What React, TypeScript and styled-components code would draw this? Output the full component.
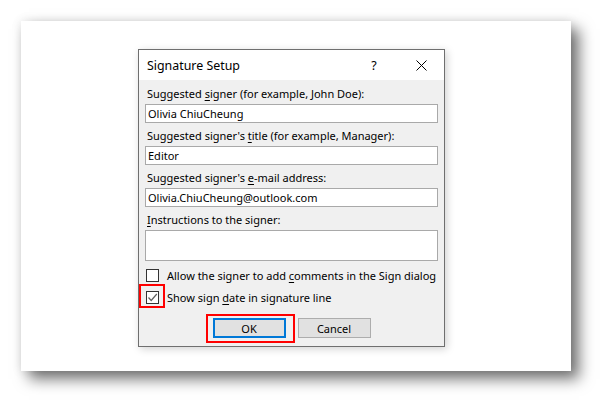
import styled, { createGlobalStyle } from "styled-components";

const Global = createGlobalStyle`
html, body {
    margin: 0;
    padding: 0;
    background: #ffffff;
}
body {
    font-family: "Noto Sans", "Open Sans", sans-serif;
    font-size: 11px;
    color: #000;
}
`

interface iField {
    label: React.ReactNode
    value?: string
    tall?: boolean
}

const Field = ({ label, value, tall }: iField) => {
    return (
        <Group>
            <Label>{label}</Label>
            <Input $tall={tall}>{value}</Input>
        </Group>
    )
}

const App = () => {
    return (
        <>
            <Global />
            <Page>
                <Card>
                    <Dialog>
                        <TitleBar>
                            <Title>Signature Setup</Title>
                            <Help>?</Help>
                            <Close>
                                <svg width="11" height="11" viewBox="0 0 11 11">
                                    <path d="M0.5 0.5 L10.5 10.5 M10.5 0.5 L0.5 10.5" stroke="#000" strokeWidth="1" fill="none" />
                                </svg>
                            </Close>
                        </TitleBar>
                        <Body>
                            <Field label={<>Suggested <u>s</u>igner (for example, John Doe):</>} value="Olivia ChiuCheung" />
                            <Field label={<>Suggested signer's <u>t</u>itle (for example, Manager):</>} value="Editor" />
                            <Field label={<>Suggested signer's <u>e</u>-mail address:</>} value="Olivia.ChiuCheung@outlook.com" />
                            <Field label={<><u>I</u>nstructions to the signer:</>} tall />
                            <CheckRow $first>
                                <Box />
                                <CheckText>Allow the signer to add <u>c</u>omments in the Sign dialog</CheckText>
                            </CheckRow>
                            <CheckRow>
                                <Box>
                                    <svg width="11" height="11" viewBox="0 0 11 11">
                                        <path d="M1.5 5.5 L4.2 8.5 L9.8 2" stroke="#606060" strokeWidth="1.2" fill="none" />
                                    </svg>
                                    <Highlight $l={-8} $t={-8} $w={26} $h={24} />
                                </Box>
                                <CheckText>Show sign <u>d</u>ate in signature line</CheckText>
                            </CheckRow>
                            <Buttons>
                                <Button $primary>
                                    OK
                                    <Highlight $l={-9} $t={-6} $w={89} $h={29} />
                                </Button>
                                <Button>Cancel</Button>
                            </Buttons>
                        </Body>
                    </Dialog>
                </Card>
            </Page>
        </>
    )
}

export default App;

const Page = styled.div`
width: 613px;
height: 413px;
padding: 21px;
box-sizing: border-box;
`
const Card = styled.div`
width: 550px;
height: 350px;
background: #fff;
box-sizing: border-box;
padding: 28px 0 0 117px;
box-shadow: 8px 8px 14px rgba(0, 0, 0, 0.55), 0 0 10px rgba(0, 0, 0, 0.1);
`
const Dialog = styled.div`
width: 307px;
height: 298px;
box-sizing: border-box;
border: 1px solid #6f6f6f;
background: #f0f0f0;
display: flex;
flex-direction: column;
box-shadow: 2px 2px 8px rgba(0, 0, 0, 0.18);
`
const TitleBar = styled.div`
height: 30px;
background: #fff;
display: flex;
align-items: center;
padding-left: 8px;
`
const Title = styled.div`
flex: 1;
font-size: 12.4px;
`
const Help = styled.div`
width: 12px;
font-size: 12.5px;
margin-right: 36px;
text-align: center;
`
const Close = styled.div`
width: 11px;
height: 11px;
margin-right: 17px;
display: flex;
`
const Body = styled.div`
flex: 1;
padding: 6px 6px 0 6px;
display: flex;
flex-direction: column;
`
const Group = styled.div`
display: flex;
flex-direction: column;
gap: 2px;
margin-bottom: 5px;
`
const Label = styled.div`
height: 16px;
line-height: 16px;
padding-left: 2px;
white-space: nowrap;
u { text-underline-offset: 2px; }
`
const Input = styled.div<{ $tall?: boolean }>`
height: ${p => (p.$tall ? 31 : 19)}px;
box-sizing: border-box;
border: 1px solid #a9a9a9;
background: #fff;
padding-left: 2px;
line-height: 17px;
white-space: nowrap;
`
const CheckRow = styled.div<{ $first?: boolean }>`
height: 22px;
display: flex;
align-items: center;
gap: 8px;
margin-left: 1px;
margin-top: ${p => (p.$first ? -2 : 0)}px;
`
const Box = styled.div`
position: relative;
flex-shrink: 0;
width: 13px;
height: 13px;
box-sizing: border-box;
border: 1px solid #333;
background: #fff;
display: flex;
align-items: center;
justify-content: center;
`
const CheckText = styled.div`
white-space: nowrap;
u { text-underline-offset: 2px; }
`
const Highlight = styled.div<{ $l: number; $t: number; $w: number; $h: number }>`
position: absolute;
left: ${p => p.$l}px;
top: ${p => p.$t}px;
width: ${p => p.$w}px;
height: ${p => p.$h}px;
box-sizing: border-box;
border: 2px solid #ff0000;
pointer-events: none;
`
const Buttons = styled.div`
display: flex;
justify-content: center;
gap: 12px;
margin-top: 10px;
`
const Button = styled.div<{ $primary?: boolean }>`
position: relative;
width: 73px;
height: 20px;
box-sizing: border-box;
background: #e1e1e1;
border: ${p => (p.$primary ? "2px solid #0078d7" : "1px solid #adadad")};
display: flex;
align-items: center;
justify-content: center;
`
